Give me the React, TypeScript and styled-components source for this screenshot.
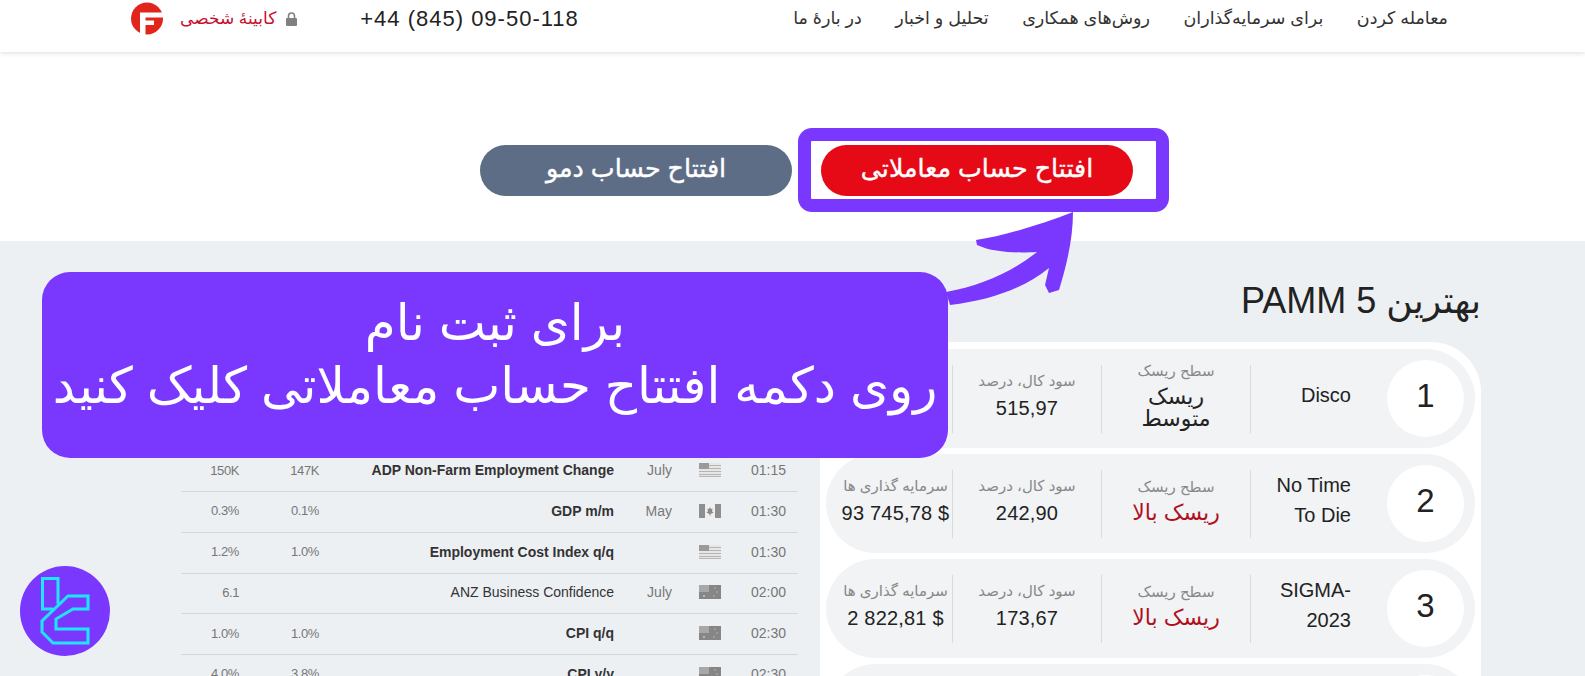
import React from 'react'
import styled, { createGlobalStyle } from 'styled-components'

const PERSIAN = `"Liberation Sans", "DejaVu Sans", sans-serif`

interface IRow {
  rank: number
  name: string[]
  risk: string[]
  high: boolean
  profit: string
  invest: string
}

const ROWS: IRow[] = [
  { rank: 1, name: ['Disco'], risk: ['ریسک', 'متوسط'], high: false, profit: '515,97', invest: '1 500,00' },
  { rank: 2, name: ['No Time', 'To Die'], risk: ['ریسک بالا'], high: true, profit: '242,90', invest: '93 745,78 $' },
  { rank: 3, name: ['SIGMA-', '2023'], risk: ['ریسک بالا'], high: true, profit: '173,67', invest: '2 822,81 $' },
  { rank: 4, name: ['Alpha'], risk: ['ریسک بالا'], high: true, profit: '150,12', invest: '1 204,50 $' },
]

interface IEvent {
  time: string
  flag: 'us' | 'ca' | 'au'
  month: string
  title: string
  bold: boolean
  forecast: string
  previous: string
}

const EVENTS: IEvent[] = [
  { time: '01:15', flag: 'us', month: 'July', title: 'ADP Non-Farm Employment Change', bold: true, forecast: '147K', previous: '150K' },
  { time: '01:30', flag: 'ca', month: 'May', title: 'GDP m/m', bold: true, forecast: '0.1%', previous: '0.3%' },
  { time: '01:30', flag: 'us', month: '', title: 'Employment Cost Index q/q', bold: true, forecast: '1.0%', previous: '1.2%' },
  { time: '02:00', flag: 'au', month: 'July', title: 'ANZ Business Confidence', bold: false, forecast: '', previous: '6.1' },
  { time: '02:30', flag: 'au', month: '', title: 'CPI q/q', bold: true, forecast: '1.0%', previous: '1.0%' },
  { time: '02:30', flag: 'au', month: '', title: 'CPI y/y', bold: true, forecast: '3.8%', previous: '4.0%' },
]

const Flag = ({ kind }: { kind: IEvent['flag'] }) => {
  if (kind === 'ca') {
    return (
      <svg width="22" height="14" viewBox="0 0 22 14">
        <rect width="22" height="14" fill="#efefef" />
        <rect width="6" height="14" fill="#8e8e8e" />
        <rect x="16" width="6" height="14" fill="#8e8e8e" />
        <path d="M11 3l1 2 1.500-.5L13 8l1-.5.5 1-3 1.500v1.500h-1V10l-3-1.500.5-1 1 .5-.5-3.500L10 5z" fill="#8a8a8a" />
      </svg>
    )
  }
  if (kind === 'au') {
    return (
      <svg width="22" height="14" viewBox="0 0 22 14">
        <rect width="22" height="14" fill="#868686" />
        <rect width="10" height="7" fill="#a8a8a8" />
        <circle cx="5" cy="11" r="1" fill="#c8c8c8" />
        <circle cx="16" cy="3" r=".8" fill="#b8b8b8" />
        <circle cx="18" cy="7" r=".8" fill="#b8b8b8" />
        <circle cx="15" cy="11" r=".8" fill="#b8b8b8" />
      </svg>
    )
  }
  return (
    <svg width="22" height="14" viewBox="0 0 22 14">
      <rect width="22" height="14" fill="#e6e6e6" />
      <rect y="2" width="22" height="1" fill="#b5b5b5" />
      <rect y="5" width="22" height="1" fill="#b5b5b5" />
      <rect y="8" width="22" height="1" fill="#b5b5b5" />
      <rect y="11" width="22" height="1" fill="#b5b5b5" />
      <rect y="13" width="22" height="1" fill="#b5b5b5" />
      <rect width="10" height="6" fill="#9a9a9a" />
    </svg>
  )
}

const App: React.FC = () => {
  return (
    <Page dir="rtl">
      <GlobalStyle />

      <Header>
        <Nav>
          <span>معامله کردن</span>
          <span>برای سرمایه‌گذاران</span>
          <span>روش‌های همکاری</span>
          <span>تحلیل و اخبار</span>
          <span>در بارهٔ ما</span>
        </Nav>
        <HeaderLeft>
          <Phone dir="ltr">+44 (845) 09-50-118</Phone>
          <Cabinet>
            <svg width="11" height="14" viewBox="0 0 11 14">
              <path d="M2.500 6V4a3 3 0 0 1 6 0v2" fill="none" stroke="#808080" strokeWidth="1.600" />
              <rect y="6" width="11" height="8" rx="1" fill="#808080" />
            </svg>
            <span>کابینهٔ شخصی</span>
          </Cabinet>
          <svg width="32" height="33" viewBox="0 0 32 33">
            <circle cx="16" cy="16.500" r="16" fill="#e1251b" />
            <path d="M9 10.500H32V15.500H14.500V18.500H23V23H14.500V33H9Z" fill="#fff" />
          </svg>
        </HeaderLeft>
      </Header>

      <Actions>
        <Highlight>
          <ActionButton $tone="#e60a16">افتتاح حساب معاملاتی</ActionButton>
        </Highlight>
        <ActionButton $tone="#5d6d85">افتتاح حساب دمو</ActionButton>
      </Actions>

      <Content>
        <PammColumn>
          <PammTitle>بهترین PAMM 5</PammTitle>
          <PammCard>
            {ROWS.map(row => (
              <PammRow key={row.rank}>
                <Rank>{row.rank}</Rank>
                <PammName dir="ltr">
                  {row.name.map(line => <div key={line}>{line}</div>)}
                </PammName>
                <PammCell $width={149} $lift={8}>
                  <CellLabel>سطح ریسک</CellLabel>
                  <RiskValue $high={row.high}>
                    {row.risk.map(line => <div key={line}>{line}</div>)}
                  </RiskValue>
                </PammCell>
                <PammCell $width={149} $lift={4}>
                  <CellLabel>سود کال، درصد</CellLabel>
                  <CellValue>{row.profit}</CellValue>
                </PammCell>
                <PammCell $width={114} $lift={4}>
                  <CellLabel>سرمایه گذاری ها</CellLabel>
                  <CellValue dir="ltr">{row.invest}</CellValue>
                </PammCell>
              </PammRow>
            ))}
          </PammCard>
        </PammColumn>

        <EventsColumn>
          {EVENTS.map(ev => (
            <EventRow key={ev.time + ev.title}>
              <EventTime>{ev.time}</EventTime>
              <EventFlag><Flag kind={ev.flag} /></EventFlag>
              <EventMonth>{ev.month}</EventMonth>
              <EventTitle $bold={ev.bold}>{ev.title}</EventTitle>
              <EventNum>{ev.forecast}</EventNum>
              <EventNum>{ev.previous}</EventNum>
            </EventRow>
          ))}
        </EventsColumn>
      </Content>

      <Arrow viewBox="0 0 128 93">
        <path d="M0 80C34 74 66 60 91 40C74 41 48 41 31 33L30 28C58 24 96 12 127 0C127 26 121 52 113 78L103 81L99 73L103 56C78 76 46 88 4 93Z" fill="#7a38ff" />
      </Arrow>

      <Banner>
        <div>برای ثبت نام</div>
        <div>روی دکمه افتتاح حساب معاملاتی کلیک کنید</div>
      </Banner>

      <Badge>
        <svg width="90" height="90" viewBox="0 0 90 90">
          <circle cx="45" cy="45" r="45" fill="#7a38ff" />
          <path d="M38 38V12.500H22.500V43H33" fill="none" stroke="#1fe5ff" strokeWidth="3" />
          <path d="M48 30H68V43H53L36 53V63H68V77H33L22 66V55Z" fill="none" stroke="#1fe5ff" strokeWidth="3" />
        </svg>
      </Badge>
    </Page>
  )
}

export default App

// Styled
const GlobalStyle = createGlobalStyle`
  html, body {
    margin: 0;
    padding: 0;
    background: #edf0f3;
    overflow: hidden;
  }
`

const Page = styled.div`
  position: relative;
  width: 1585px;
  height: 676px;
  overflow: hidden;
  background: #edf0f3;
  font-family: ${PERSIAN};
  color: #222;
`

const Header = styled.header`
  display: flex;
  justify-content: space-between;
  align-items: flex-start;
  height: 52px;
  padding: 0 137px 0 131px;
  background: #fff;
  box-shadow: 0 1px 5px rgba(0, 0, 0, .14);
  position: relative;
`

const Nav = styled.nav`
  display: flex;
  gap: 33.500px;
  padding-top: 8px;
  font-size: 17.500px;
  line-height: 20px;
  color: #333;
`

const HeaderLeft = styled.div`
  display: flex;
  align-items: center;
  padding-top: 2px;

  > svg {
    margin-right: 17px;
  }
`

const Phone = styled.div`
  font-size: 22px;
  letter-spacing: 1px;
  color: #222;
`

const Cabinet = styled.div`
  display: flex;
  align-items: center;
  gap: 10px;
  margin-right: 63px;
  font-size: 17px;
  color: #c8102e;
`

const Actions = styled.div`
  display: flex;
  align-items: flex-start;
  gap: 6px;
  box-sizing: border-box;
  height: 189px;
  padding: 76px 416px 0 0;
  background: #fff;
`

const Highlight = styled.div`
  display: flex;
  padding: 4px 23px 3px 10px;
  border: 13px solid #7a38ff;
  border-radius: 14px;
  background: #fff;
`

const ActionButton = styled.button<{ $tone: string }>`
  width: 312px;
  height: 51px;
  padding: 0 0 4px;
  border: none;
  border-radius: 26px;
  background: ${p => p.$tone};
  color: #fff;
  font-family: ${PERSIAN};
  font-size: 25.300px;
  font-weight: 400;
  -webkit-text-stroke: .4px #fff;

  ${Actions} > & {
    margin-top: 17px;
  }
`

const Content = styled.div`
  display: flex;
  align-items: flex-start;
  gap: 22px;
  padding-right: 104px;
`

const PammColumn = styled.div`
  width: 661px;
`

const PammTitle = styled.h2`
  margin: 0;
  height: 101px;
  padding-top: 39px;
  box-sizing: border-box;
  font-size: 36px;
  line-height: 42px;
  font-weight: 400;
  color: #222;
`

const PammCard = styled.div`
  display: flex;
  flex-direction: column;
  gap: 6px;
  padding: 7px 6px 0;
  background: #fff;
  border-radius: 50px 50px 0 0;
`

const PammRow = styled.div`
  display: flex;
  align-items: center;
  flex: none;
  height: 99px;
  padding-right: 11px;
  border-radius: 50px;
  background: #f1f3f5;
`

const Rank = styled.div`
  display: flex;
  align-items: center;
  justify-content: center;
  flex: none;
  box-sizing: border-box;
  width: 77px;
  height: 77px;
  padding-bottom: 6px;
  border-radius: 50%;
  background: #fff;
  font-family: "Liberation Sans", sans-serif;
  font-size: 33px;
  color: #222;
`

const PammName = styled.div`
  flex: none;
  width: 100px;
  margin-right: 36px;
  padding-bottom: 8px;
  font-family: "Liberation Sans", sans-serif;
  font-size: 20px;
  line-height: 30px;
  text-align: right;
  color: #222;
`

const PammCell = styled.div<{ $width: number; $lift: number }>`
  display: flex;
  flex-direction: column;
  align-items: center;
  justify-content: center;
  flex: none;
  box-sizing: border-box;
  width: ${p => p.$width}px;
  height: 68px;
  padding-bottom: ${p => p.$lift}px;
  border-right: 1px solid #d8dbde;
`

const CellLabel = styled.div`
  font-size: 15px;
  line-height: 22px;
  color: #888;
  white-space: nowrap;
`

const CellValue = styled.div`
  margin-top: 1px;
  font-size: 20px;
  line-height: 30px;
  letter-spacing: .2px;
  color: #222;
  white-space: nowrap;
`

const RiskValue = styled.div<{ $high: boolean }>`
  margin-top: 4px;
  font-size: 22px;
  line-height: 22px;
  text-align: center;
  white-space: nowrap;
  color: ${p => (p.$high ? '#b0101e' : '#222')};
`

const EventsColumn = styled.div`
  width: 617px;
  padding-top: 210.250px;
`

const EventRow = styled.div`
  display: flex;
  align-items: center;
  box-sizing: border-box;
  height: 40.750px;
  padding-bottom: 2px;
  border-bottom: 1px solid #d4d7da;
  font-family: "Liberation Sans", sans-serif;
  font-size: 14px;
  color: #777;
`

const EventTime = styled.div`
  flex: none;
  box-sizing: border-box;
  width: 77px;
  padding-right: 12px;
  direction: ltr;
  text-align: right;
`

const EventFlag = styled.div`
  display: flex;
  flex: none;
  width: 22px;
`

const EventMonth = styled.div`
  flex: none;
  box-sizing: border-box;
  width: 85px;
  padding-right: 27px;
  text-align: right;
`

const EventTitle = styled.div<{ $bold: boolean }>`
  flex: none;
  width: 295px;
  direction: ltr;
  text-align: right;
  font-weight: ${p => (p.$bold ? 700 : 400)};
  color: #333;
`

const EventNum = styled.div`
  flex: none;
  width: 80px;
  direction: ltr;
  text-align: right;
  font-size: 13px;
  letter-spacing: -.4px;
`

const Arrow = styled.svg`
  position: absolute;
  left: 946px;
  top: 212px;
  width: 128px;
  height: 93px;
`

const Banner = styled.div`
  position: absolute;
  left: 42px;
  top: 272px;
  display: flex;
  flex-direction: column;
  align-items: center;
  box-sizing: border-box;
  width: 906px;
  height: 186px;
  padding-top: 20px;
  border-radius: 28px;
  background: #7a38ff;
  color: #fff;
  font-size: 50px;
  line-height: 63px;
  white-space: nowrap;
`

const Badge = styled.div`
  position: absolute;
  left: 20px;
  top: 566px;
  display: flex;
`
